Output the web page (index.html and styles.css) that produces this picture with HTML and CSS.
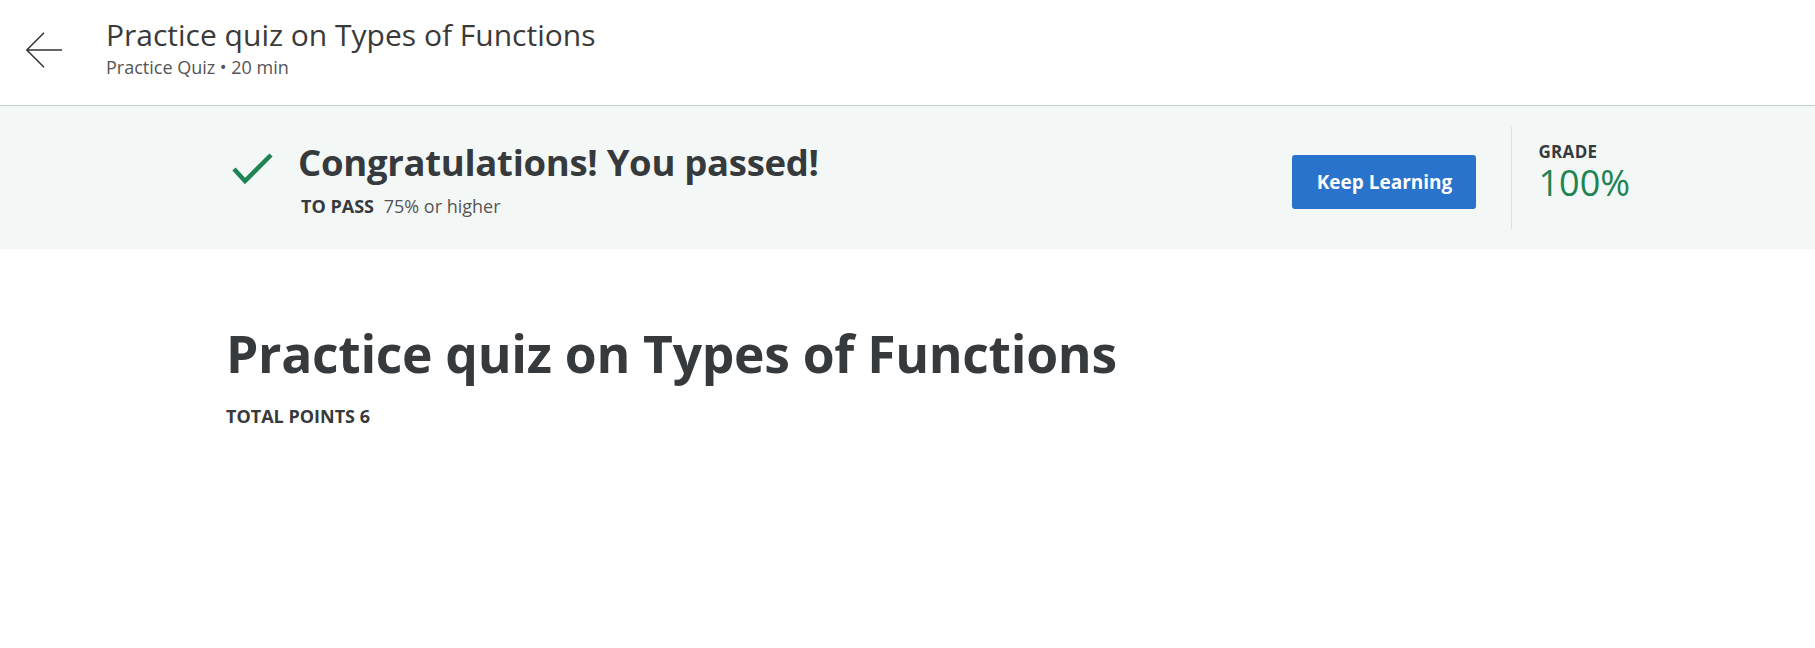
FILE: index.html
```html
<!DOCTYPE html>
<html lang="en">
<head>
<meta charset="utf-8">
<title>Practice quiz on Types of Functions</title>
<link rel="stylesheet" href="styles.css">
</head>
<body>
<header class="topbar">
  <button class="back" aria-label="Back">
    <svg width="36" height="36" viewBox="0 0 36 36" fill="none" stroke="#333" stroke-width="1.5">
      <path d="M0.8 18 H36 M18 0.8 L0.8 18 L18 35.2"/>
    </svg>
  </button>
  <div class="titles">
    <div class="title">Practice quiz on Types of Functions</div>
    <div class="subtitle">Practice Quiz • 20 min</div>
  </div>
</header>
<section class="banner">
  <div class="banner-inner">
    <div class="result">
      <svg class="check" width="42" height="32" viewBox="0 0 42 32" fill="none" stroke="#1f8354" stroke-width="4.5">
        <path d="M2 16 L13 28 L39 2"/>
      </svg>
      <div class="result-text">
        <div class="congrats">Congratulations! You passed!</div>
        <div class="topass"><span class="label">TO PASS</span> 75% or higher</div>
      </div>
    </div>
    <div class="actions">
      <div class="keep">Keep Learning</div>
      <div class="divider"></div>
      <div class="grade">
        <div class="grade-label">GRADE</div>
        <div class="grade-value">100%</div>
      </div>
    </div>
  </div>
</section>
<main class="content">
  <h1 class="quiz-title">Practice quiz on Types of Functions</h1>
  <div class="points">TOTAL POINTS 6</div>
</main>
</body>
</html>
```
FILE: styles.css
```css
* { box-sizing: border-box; }
html, body { margin: 0; padding: 0; background: #fff; }
body {
  font-family: "Open Sans", "Noto Sans", sans-serif;
  color: #373a3c;
}
.topbar {
  height: 106px;
  display: flex;
  align-items: flex-start;
  border-bottom: 1px solid #c3cccf;
}
.back {
  border: 0;
  background: none;
  padding: 0;
  margin: 32px 0 0 26px;
  width: 36px;
  height: 36px;
  display: flex;
}
.titles {
  margin-left: 44px;
  padding-top: 16px;
}
.title {
  font-size: 30px;
  line-height: 38px;
  color: #3a3a3a;
}
.subtitle {
  font-size: 18px;
  line-height: 24px;
  margin-top: 1px;
  color: #555;
}
.banner {
  background: #f3f8f6;
  height: 143px;
}
.banner-inner {
  display: flex;
  justify-content: space-between;
  padding: 0 185px 0 228px;
  height: 100%;
}
.result {
  display: flex;
  align-items: flex-start;
  padding-top: 31px;
}
.check { margin: 16px 0 0 4px; }
.result-text { margin-left: 24px; }
.congrats {
  font-size: 36.5px;
  font-weight: 700;
  line-height: 50px;
  letter-spacing: -0.3px;
}
.topass {
  font-size: 18px;
  line-height: 24px;
  margin-top: 7px;
  padding-left: 3px;
  color: #555;
}
.topass .label { font-weight: 700; color: #373a3c; margin-right: 5px; }
.actions {
  display: flex;
  align-items: flex-start;
  padding-top: 21px;
}
.keep {
  margin-top: 28px;
  width: 184px;
  height: 54px;
  background: #2a73cc;
  color: #fff;
  border-radius: 3px;
  font-weight: 700;
  font-size: 19px;
  display: flex;
  align-items: center;
  justify-content: center;
}
.divider {
  width: 1px;
  height: 102px;
  background: #dbe0e2;
  margin-left: 35px;
}
.grade { margin-left: 26px; padding-top: 14px; }
.grade-label {
  font-size: 17px;
  font-weight: 700;
  line-height: 22px;
  letter-spacing: 0.3px;
}
.grade-value {
  font-size: 36px;
  line-height: 40px;
  color: #1f8354;
}
.content { padding: 69px 0 0 226px; }
.quiz-title {
  margin: 0;
  font-size: 51.6px;
  line-height: 70px;
  font-weight: 700;
  letter-spacing: -0.3px;
}
.points {
  margin-top: 17px;
  font-size: 18px;
  font-weight: 700;
  line-height: 22px;
}
```
